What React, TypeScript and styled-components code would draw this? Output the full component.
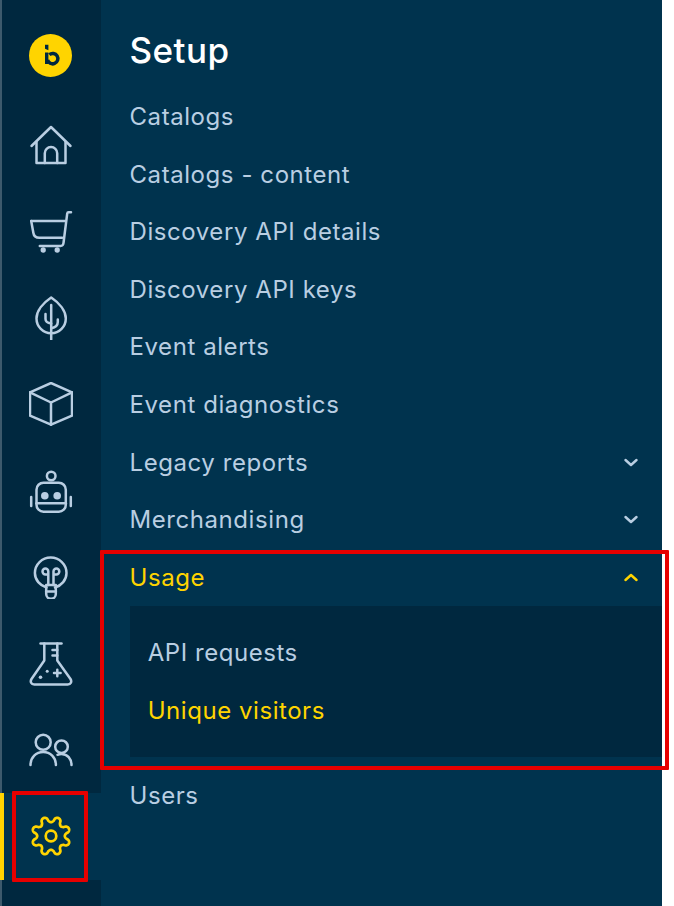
import React from "react";
import styled, { createGlobalStyle } from "styled-components";

const INK = "#b9cee2";
const YELLOW = "#ffd400";
const RAIL = "#00283f";
const PANEL = "#00334e";
const SUB = "#00283f";

const Global = createGlobalStyle`
  html, body { margin: 0; padding: 0; background: #fff; }
  body { font-family: Inter, "Liberation Sans", sans-serif; }
`;

const Page = styled.div`
  position: relative;
  display: flex;
  width: 674px;
  height: 906px;
  overflow: hidden;
`;

const Rail = styled.nav`
  width: 99px;
  flex: none;
  background: ${RAIL};
  border-left: 2px solid #3d5a6c;
  display: flex;
  flex-direction: column;
`;

const LogoWrap = styled.div`
  height: 102px;
  box-sizing: border-box;
  padding: 33.5px 2px 0 0;
  display: flex;
  justify-content: center;
`;

const RailItem = styled.div<{ $active?: boolean }>`
  height: 86.4px;
  flex: none;
  box-sizing: border-box;
  padding-right: 2px;
  display: flex;
  align-items: center;
  justify-content: center;
  color: ${(p) => (p.$active ? YELLOW : INK)};
  ${(p) =>
    p.$active &&
    `
    background: ${PANEL};
    margin-left: -2px;
    border-left: 4px solid ${YELLOW};
    & > svg { margin-left: -2px; }
  `}
`;

const Panel = styled.aside`
  width: 561px;
  flex: none;
  background: ${PANEL};
  display: flex;
  flex-direction: column;
`;

const Title = styled.h1`
  margin: 0;
  height: 87.2px;
  box-sizing: border-box;
  padding: 26.5px 0 0 28.5px;
  font-size: 35px;
  line-height: 46px;
  font-weight: 500;
  letter-spacing: 0.45px;
  color: #fff;
`;

const Row = styled.div<{ $open?: boolean }>`
  height: 57.6px;
  flex: none;
  box-sizing: border-box;
  display: flex;
  align-items: center;
  justify-content: space-between;
  padding: 1px 24px 0 28.5px;
  font-size: 24px;
  letter-spacing: 0.57px;
  color: ${(p) => (p.$open ? YELLOW : INK)};
`;

const SubList = styled.div`
  margin: 0 0 9.6px 28.5px;
  padding: 17.7px 0 18.7px 18.2px;
  background: ${SUB};
`;

const SubItem = styled.div<{ $active?: boolean }>`
  height: 57.6px;
  box-sizing: border-box;
  padding-top: 1px;
  display: flex;
  align-items: center;
  font-size: 24px;
  letter-spacing: 0.55px;
  color: ${(p) => (p.$active ? YELLOW : INK)};
`;

const Highlight = styled.div<{ $x: number; $y: number; $w: number; $h: number }>`
  position: absolute;
  left: ${(p) => p.$x}px;
  top: ${(p) => p.$y}px;
  width: ${(p) => p.$w}px;
  height: ${(p) => p.$h}px;
  box-sizing: border-box;
  border: 4px solid #e60000;
  border-radius: 1px;
  pointer-events: none;
`;

const Icon: React.FC<{ children: React.ReactNode }> = ({ children }) => (
  <svg width="44" height="44" viewBox="0 0 44 44" fill="none" stroke="currentColor" strokeWidth="2.5" strokeLinecap="round" strokeLinejoin="round">
    {children}
  </svg>
);

const Logo = () => (
  <svg width="43" height="43" viewBox="0 0 43 43">
    <circle cx="21.5" cy="21.5" r="21.5" fill={YELLOW} />
    <path d="M16 10.800h3.400v5.400L16 14.800z" fill={RAIL} />
    <path d="M16 18.500h3.400V30H16z" fill={RAIL} />
    <path d="M20.300 20.700A5.200 5.200 0 1 1 18.600 25.800" fill="none" stroke={RAIL} strokeWidth="3.500" />
  </svg>
);

const Chevron: React.FC<{ up?: boolean }> = ({ up }) => (
  <svg width="14" height="9" viewBox="0 0 14 9" fill="none" stroke="currentColor" strokeWidth="2.4" strokeLinecap="round" strokeLinejoin="round">
    <path d={up ? "M1.500 7 7 2l5.500 5" : "M1.500 2 7 7l5.500-5"} />
  </svg>
);

const gearPath = (() => {
  const pts: string[] = [];
  for (let i = 0; i < 320; i++) {
    const t = (i / 320) * Math.PI * 2;
    const c = -Math.cos(8 * t);
    const r = 16.6 + 2.8 * Math.sign(c) * Math.pow(Math.abs(c), 0.6);
    pts.push(`${(22 + r * Math.cos(t)).toFixed(2)} ${(22 + r * Math.sin(t)).toFixed(2)}`);
  }
  return "M" + pts.join("L") + "Z";
})();

const icons = [
  <Icon key="home">
    <path d="M2.500 23 22 4l19.500 19" />
    <path d="M7.500 19v21h29V19" />
    <path d="M15.800 40V30.200a6.200 6.200 0 0 1 12.400 0V40" />
  </Icon>,
  <Icon key="cart">
    <path d="M42 2.300h-2.400c-.8 0-1.300.5-1.400 1.300L34.500 33c-.2 2-1.300 3-3 3H10.800" />
    <path d="M2.200 11h33.600" />
    <path d="M2.200 11l2.200 12c.4 3 2.600 4.700 6 4.700h22.800" />
    <circle cx="14.200" cy="40" r="1.400" fill="currentColor" />
    <circle cx="28.200" cy="40" r="1.400" fill="currentColor" />
  </Icon>,
  <Icon key="leaf">
    <path d="M22.200 1.500C14 7 7.500 15 7.500 22.500c0 8 6.500 14.800 14.700 14.800s14.600-6.800 14.600-14.800C36.800 15 30.400 7 22.200 1.500Z" />
    <path d="M22.200 9v34.500" />
    <path d="M16.500 18v5c0 2.500 2 4 5.700 4.500" />
    <path d="M28.800 23.500v2.500c0 3-2.500 5.500-6.600 6.300" />
  </Icon>,
  <Icon key="cube">
    <path d="M22 1 43 10.300v23.400L22 42.700 1 33.700V10.300Z" />
    <path d="M1 10.300 22 20.500l21-10.200" />
    <path d="M22 20.500v22.200" />
  </Icon>,
  <Icon key="robot">
    <circle cx="22.200" cy="7" r="4.300" />
    <rect x="7.500" y="13.700" width="29.300" height="29" rx="7" />
    <path d="M7.500 34.300h29.300" />
    <circle cx="15.800" cy="26.700" r="3.800" fill="currentColor" stroke="none" />
    <circle cx="28.200" cy="26.700" r="3.800" fill="currentColor" stroke="none" />
    <path d="M2.200 28v9M41.800 28v9" />
  </Icon>,
  <Icon key="bulb">
    <path d="M17.500 32.500C11 30.500 5.900 25 5.900 18 5.900 9.500 13 2.500 21.700 2.500S37.500 9.500 37.500 18c0 7-5 12.500-11.500 14.500" />
    <path d="M17.200 30h9.600v9a4.800 4.800 0 0 1-9.600 0Z" />
    <path d="M17.200 36.500h9.600" />
    <path d="M19.300 30V16.500a2.900 2.900 0 1 0-2.900 2.900h2.900" />
    <path d="M24.500 30V16.500a2.900 2.900 0 1 1 2.900 2.900h-2.900" />
  </Icon>,
  <Icon key="flask">
    <path d="M11.500 1.500h21" />
    <path d="M15.300 1.500v17L2.500 37c-1.600 2.700-.4 5.500 2.800 5.500h33.400c3.200 0 4.400-2.800 2.800-5.500L28.300 18.500v-17" />
    <path d="M23.500 8h4.800M23.500 13.500h4.800" />
    <circle cx="11.500" cy="35.300" r="1.800" fill="currentColor" stroke="none" />
    <circle cx="18.200" cy="29.300" r="1.500" fill="currentColor" stroke="none" />
    <path d="M25 31h6.600M28.300 27.700v6.600" />
  </Icon>,
  <Icon key="users">
    <circle cx="14.200" cy="14.300" r="7.500" />
    <path d="M1.500 37c0-7.500 5.600-13 12.700-13s12.700 5.500 12.700 13" />
    <circle cx="32.500" cy="18.700" r="6.300" />
    <path d="M28.500 26.800c1.300-.6 2.600-.9 4-.9 5.800 0 10 4.800 10 11.100" />
  </Icon>,
  <Icon key="gear">
    <path d={gearPath} strokeWidth="2.700" />
    <circle cx="22" cy="22" r="5.300" strokeWidth="2.700" />
  </Icon>,
];

const items: { label: string; chevron?: boolean }[] = [
  { label: "Catalogs" },
  { label: "Catalogs - content" },
  { label: "Discovery API details" },
  { label: "Discovery API keys" },
  { label: "Event alerts" },
  { label: "Event diagnostics" },
  { label: "Legacy reports", chevron: true },
  { label: "Merchandising", chevron: true },
];

export default function App() {
  return (
    <Page>
      <Global />
      <Rail>
        <LogoWrap>
          <Logo />
        </LogoWrap>
        {icons.map((icon, i) => (
          <RailItem key={i} $active={i === icons.length - 1}>
            {icon}
          </RailItem>
        ))}
      </Rail>
      <Panel>
        <Title>Setup</Title>
        {items.map((it) => (
          <Row key={it.label}>
            {it.label}
            {it.chevron && <Chevron />}
          </Row>
        ))}
        <Row $open>
          Usage
          <Chevron up />
        </Row>
        <SubList>
          <SubItem>API requests</SubItem>
          <SubItem $active>Unique visitors</SubItem>
        </SubList>
        <Row>Users</Row>
      </Panel>
      <Highlight $x={12} $y={791} $w={76} $h={91} />
      <Highlight $x={100} $y={550} $w={569} $h={220} />
    </Page>
  );
}
